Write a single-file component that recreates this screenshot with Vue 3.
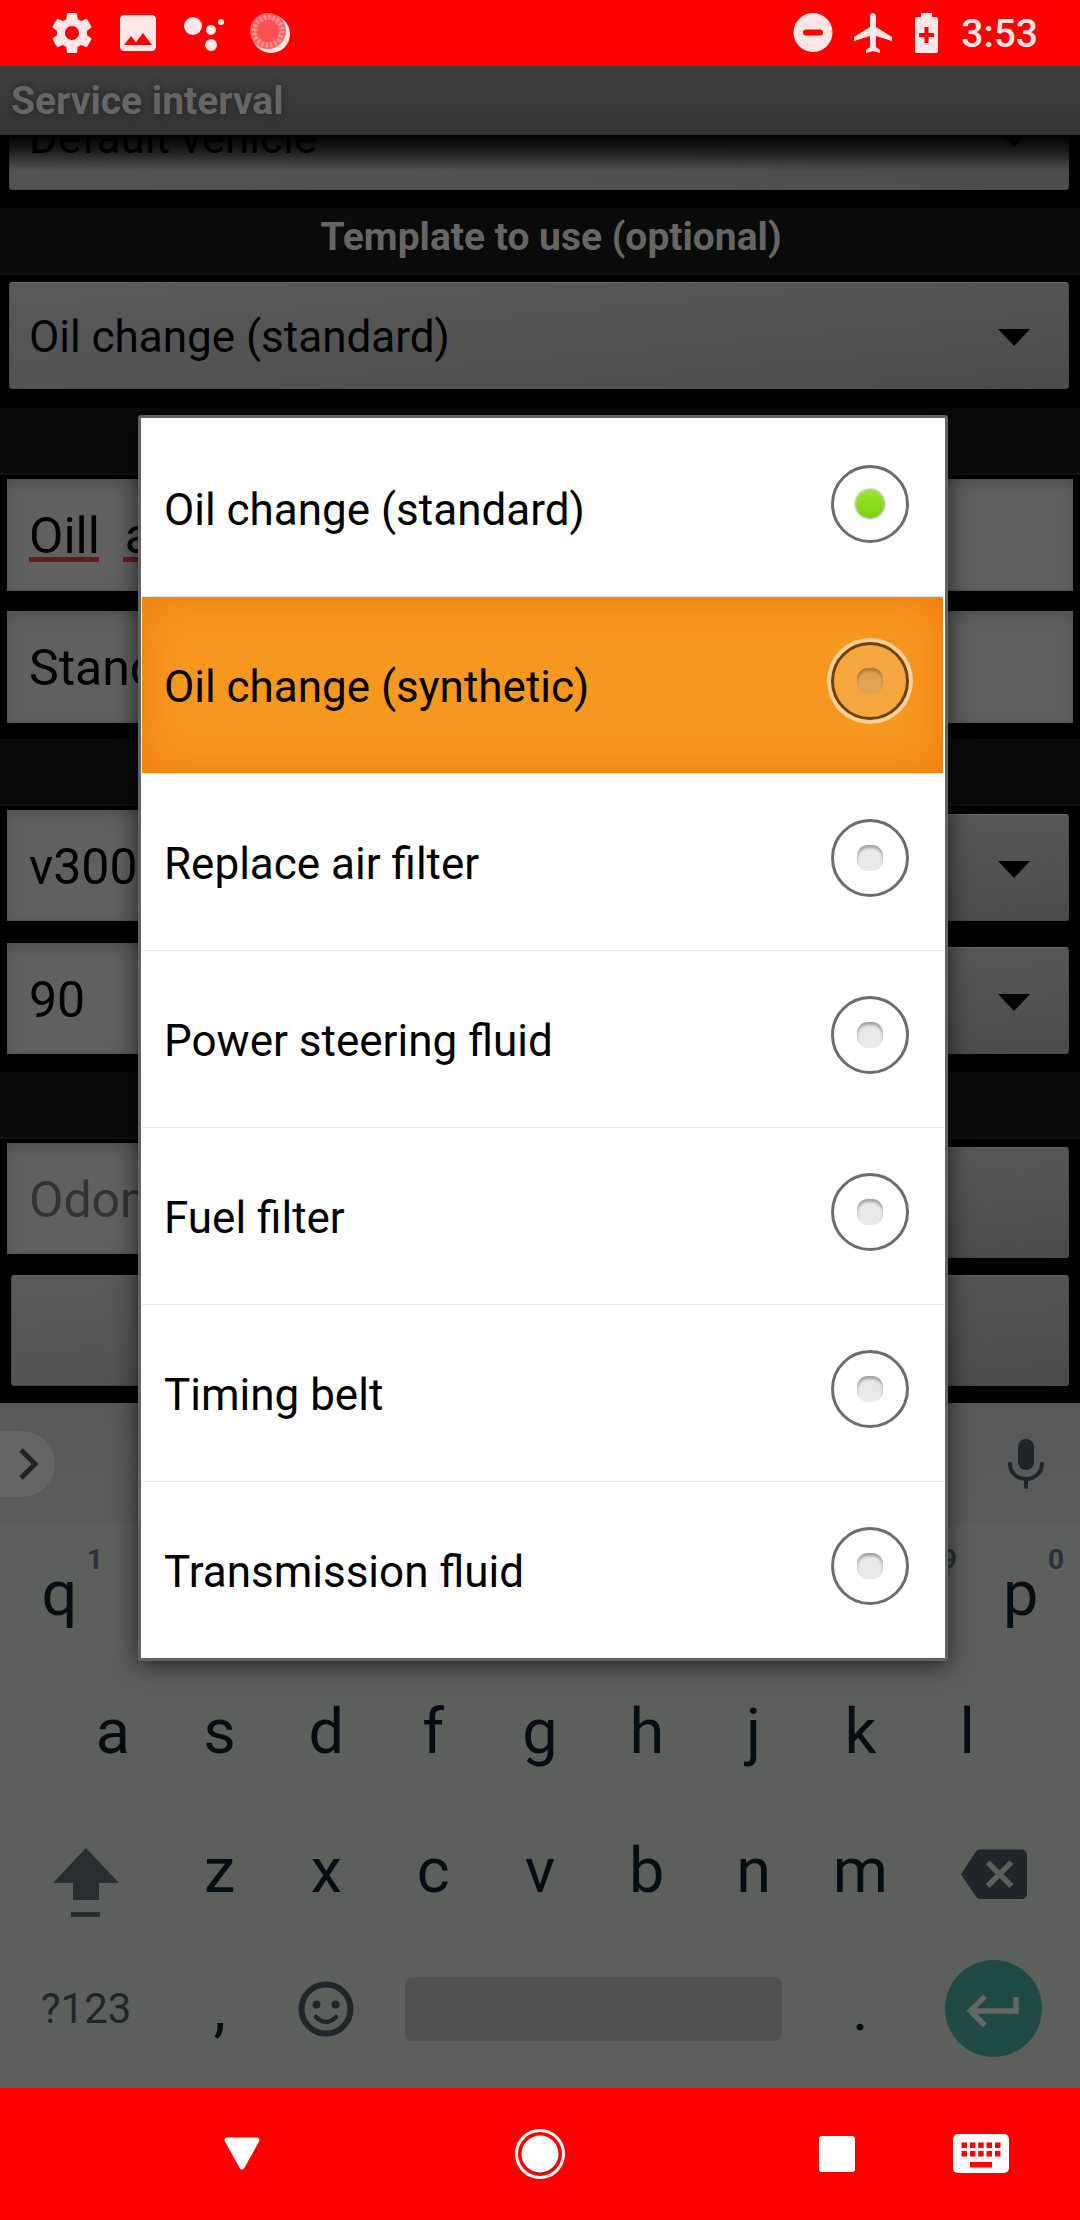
<script setup>
import { ref } from 'vue'

const templates = [
  'Oil change (standard)',
  'Oil change (synthetic)',
  'Replace air filter',
  'Power steering fluid',
  'Fuel filter',
  'Timing belt',
  'Transmission fluid',
]
const selected = ref(templates[0])
const pressed = templates[1]

const description = ref('Oill  a')
const kind = ref('Standard')
const distance = ref('v300')
const days = ref('90')
const odometer = ref('')

const topRow = [...'qwertyuiop'].map((key, i) => ({ key, hint: (i + 1) % 10 }))
const homeRow = [...'asdfghjkl']
const bottomRow = [...'zxcvbnm']
</script>

<template>
  <div class="screen">
    <header class="status">
      <svg class="icon48" viewBox="0 0 24 24"><path fill-rule="evenodd" d="M19.43 12.98c.04-.32.07-.64.07-.98s-.03-.66-.07-.98l2.11-1.65c.19-.15.24-.42.12-.64l-2-3.46c-.12-.22-.39-.3-.61-.22l-2.49 1c-.52-.4-1.08-.73-1.69-.98l-.38-2.65C14.46 2.18 14.25 2 14 2h-4c-.25 0-.46.18-.49.42l-.38 2.65c-.61.25-1.17.59-1.69.98l-2.49-1c-.23-.09-.49 0-.61.22l-2 3.46c-.13.22-.07.49.12.64l2.11 1.65c-.04.32-.07.65-.07.98s.03.66.07.98l-2.11 1.65c-.19.15-.24.42-.12.64l2 3.46c.12.22.39.3.61.22l2.49-1c.52.4 1.08.73 1.69.98l.38 2.65c.03.24.24.42.49.42h4c.25 0 .46-.18.49-.42l.38-2.65c.61-.25 1.17-.59 1.69-.98l2.49 1c.23.09.49 0 .61-.22l2-3.46c.12-.22.07-.49-.12-.64l-2.11-1.65zM12 15.5c-1.93 0-3.5-1.57-3.5-3.5s1.57-3.5 3.5-3.5 3.5 1.57 3.5 3.5-1.57 3.5-3.5 3.5z"/></svg>
      <svg class="icon48" viewBox="0 0 24 24"><path d="M21 19V5c0-1.1-.9-2-2-2H5c-1.1 0-2 .9-2 2v14c0 1.1.9 2 2 2h14c1.1 0 2-.9 2-2zM8.500 13.500l2.500 3.010L14.500 12l4.500 6H5l3.500-4.500z"/></svg>
      <svg class="icon48" viewBox="0 0 48 48"><circle cx="13" cy="17" r="9"/><circle cx="31" cy="21" r="5"/><circle cx="41" cy="13" r="3"/><circle cx="31" cy="36" r="6"/></svg>
      <svg class="icon48" viewBox="0 0 48 48">
        <circle cx="25" cy="25" r="19"/>
        <circle cx="22" cy="22" r="18" fill="#ff6464"/>
        <circle cx="22" cy="22" r="14" fill="none" stroke="#ff9c9c" stroke-width="5" stroke-dasharray="2 2.400"/>
        <circle cx="22" cy="22" r="11" fill="#ff5050"/>
      </svg>
      <span class="grow"></span>
      <svg class="icon48" viewBox="0 0 48 48"><path fill-rule="evenodd" d="M24 4a19.500 19.500 0 1 0 0 39 19.500 19.500 0 0 0 0-39zM17 20.500h14a3 3 0 0 1 0 6H17a3 3 0 0 1 0-6z"/></svg>
      <svg class="icon48" viewBox="-0.5 0 24 24"><path d="M21 16v-2l-8-5V3.500C13 2.670 12.330 2 11.500 2S10 2.670 10 3.500V9l-8 5v2l8-2.500V19l-2 1.500V22l3.500-1 3.500 1v-1.500L13 19v-5.500l8 2.500z"/></svg>
      <svg class="battery" viewBox="0 0 34 48"><path fill-rule="evenodd" d="M12 4h11v4h4a2 2 0 0 1 2 2v32a2 2 0 0 1-2 2H8a2 2 0 0 1-2-2V10a2 2 0 0 1 2-2h4zM15.500 18v6H10v4h5.500v6h4v-6H25v-4h-5.500v-6z"/></svg>
      <span class="clock">3:53</span>
    </header>

    <h1 class="title">Service interval</h1>

    <main class="form">
      <div class="spinner first">
        <select aria-label="Vehicle"><option>Default vehicle</option></select>
        <svg class="arrow" viewBox="0 0 32 17"><path d="M0 0h32L16 17z"/></svg>
      </div>

      <h2 class="section">Template to use (optional)</h2>
      <div class="fields template">
        <div class="spinner">
          <select v-model="selected" aria-label="Template to use (optional)">
            <option v-for="name in templates" :key="name">{{ name }}</option>
          </select>
          <svg class="arrow" viewBox="0 0 32 17"><path d="M0 0h32L16 17z"/></svg>
        </div>
      </div>

      <div class="section"></div>
      <div class="fields wide">
        <div class="spelled">
          <input v-model="description" class="text" type="text" aria-label="Description" spellcheck="false">
          <i class="misspelt word"></i><i class="misspelt next"></i>
        </div>
        <input v-model="kind" class="text" type="text" aria-label="Type">
      </div>

      <div class="section"></div>
      <div class="fields">
        <div class="pair">
          <input v-model="distance" class="text" type="text" aria-label="Distance interval">
          <div class="spinner">
            <select aria-label="Distance unit"><option></option></select>
            <svg class="arrow" viewBox="0 0 32 17"><path d="M0 0h32L16 17z"/></svg>
          </div>
        </div>
        <div class="pair">
          <input v-model="days" class="text" type="text" aria-label="Time interval">
          <div class="spinner">
            <select aria-label="Time unit"><option></option></select>
            <svg class="arrow" viewBox="0 0 32 17"><path d="M0 0h32L16 17z"/></svg>
          </div>
        </div>
      </div>

      <div class="section"></div>
      <div class="fields last">
        <div class="pair">
          <input v-model="odometer" class="text" type="text" placeholder="Odometer" aria-label="Odometer">
          <button class="action side" type="button" aria-label="Pick date"></button>
        </div>
        <button class="action" type="button" aria-label="Save"></button>
      </div>
    </main>

    <section class="keyboard">
      <div class="suggest">
        <button class="expand" type="button" aria-label="More">
          <svg viewBox="0 0 20 32"><path d="M2 2l14 14L2 30" fill="none" stroke="#1d2326" stroke-width="5"/></svg>
        </button>
        <button class="mic" type="button" aria-label="Voice input">
          <svg viewBox="0 0 36 50"><rect x="10" width="16" height="31" rx="8" fill="#1f2427"/><path d="M2 25a16 15 0 0 0 32 0M18 41v7" fill="none" stroke="#1f2427" stroke-width="4" stroke-linecap="round"/></svg>
        </button>
      </div>
      <div class="keys">
        <div class="keyrow">
          <button v-for="k in topRow" :key="k.key" class="key" type="button">{{ k.key }}<sup class="hint">{{ k.hint }}</sup></button>
        </div>
        <div class="keyrow home">
          <button v-for="k in homeRow" :key="k" class="key" type="button">{{ k }}</button>
        </div>
        <div class="keyrow">
          <button class="key mod" type="button" aria-label="Shift">
            <svg class="shift" viewBox="0 0 66 92"><path fill="#282e30" d="M33 24l33 35H46v17H20V59H0zM18 88h29v5H18z"/></svg>
          </button>
          <button v-for="k in bottomRow" :key="k" class="key" type="button">{{ k }}</button>
          <button class="key mod" type="button" aria-label="Backspace">
            <svg class="icon66" viewBox="0 -1.5 24 24"><path fill="#20262a" d="M22 3H7c-.69 0-1.23.35-1.590.880L0 12l5.410 8.110c.36.53.9.89 1.590.89h15c1.100 0 2-.9 2-2V5c0-1.100-.9-2-2-2zm-3 12.590L17.590 17 14 13.410 10.410 17 9 15.590 12.590 12 9 8.410 10.410 7 14 10.590 17.590 7 19 8.410 15.410 12 19 15.590z"/></svg>
          </button>
        </div>
        <div class="keyrow">
          <button class="key mod symbols" type="button">?123</button>
          <button class="key" type="button">,</button>
          <button class="key" type="button" aria-label="Emoji">
            <svg class="emoji" viewBox="0 0 56 56"><circle cx="28" cy="28" r="24.500" fill="none" stroke="#20262a" stroke-width="6"/><circle cx="18.500" cy="23.500" r="4" fill="#20262a"/><circle cx="37.500" cy="23.500" r="4" fill="#20262a"/><path d="M18 36q10 10 20 0" fill="none" stroke="#20262a" stroke-width="4.500" stroke-linecap="round"/></svg>
          </button>
          <button class="key space" type="button" aria-label="Space"><span class="bar"></span></button>
          <button class="key" type="button">.</button>
          <button class="key mod" type="button" aria-label="Enter">
            <span class="enter"><svg class="icon66" viewBox="0 -0.7 24 24"><path fill="#666" d="M19 7v4H5.830l3.580-3.590L8 6l-6 6 6 6 1.410-1.410L5.830 13H21V7z"/></svg></span>
          </button>
        </div>
      </div>
    </section>

    <nav class="nav">
      <button class="back" type="button" aria-label="Back"><svg width="38" height="34" viewBox="0 0 38 34"><path d="M4 3h30L19 30z" fill="#fff" stroke="#fff" stroke-width="5" stroke-linejoin="round"/></svg></button>
      <button class="homekey" type="button" aria-label="Home"><svg width="50" height="50" viewBox="0 0 50 50"><circle cx="25" cy="25" r="23.500" fill="none" stroke="#fff" stroke-width="3"/><circle cx="25.500" cy="26" r="18.500" fill="#8d2020"/><circle cx="25" cy="25" r="18.500" fill="#fff"/></svg></button>
      <button class="recents" type="button" aria-label="Recent apps"><svg width="36" height="36" viewBox="0 0 36 36"><rect width="36" height="36" rx="3" fill="#fff"/></svg></button>
      <button class="ime" type="button" aria-label="Switch keyboard"><svg width="56" height="40" viewBox="0 0 56 40"><path fill="#fff" fill-rule="evenodd" d="M5 0h46a5 5 0 0 1 5 5v29a5 5 0 0 1-5 5H5a5 5 0 0 1-5-5V5a5 5 0 0 1 5-5zM8.500 8.500v5.500H14V8.500zM17 8.500v5.500h5.500V8.500zM25.200 8.500v5.500h5.500V8.500zM33.500 8.500v5.500H39V8.500zM42 8.500v5.500h5.500V8.500zM8.500 17v5.500H14V17zM17 17v5.500h5.500V17zM25.200 17v5.500h5.500V17zM33.500 17v5.500H39V17zM42 17v5.500h5.500V17zM17 28v5.500h22V28z"/></svg></button>
    </nav>

    <div class="overlay">
      <div class="dialog" role="dialog" aria-label="Template to use">
        <label v-for="name in templates" :key="name" class="choice" :class="{ pressed: name === pressed }">
          <span>{{ name }}</span>
          <input v-model="selected" type="radio" name="template" :value="name">
        </label>
      </div>
    </div>
  </div>
</template>

<style>
body {
  margin: 0;
  background: #000;
}
</style>

<style scoped>
.screen {
  position: relative;
  display: flex;
  flex-direction: column;
  min-height: 100vh;
  background: #000;
  font-family: Roboto, "Liberation Sans", sans-serif;
}
.screen * {
  box-sizing: border-box;
}
button,
input,
select {
  appearance: none;
  margin: 0;
  padding: 0;
  border: 0;
  border-radius: 0;
  background: none;
  font: inherit;
  color: inherit;
}
svg {
  display: block;
  flex: none;
}

/* status bar */
.status {
  display: flex;
  align-items: center;
  gap: 18px;
  height: 66px;
  padding: 0 42px 0 48px;
  background: #f00;
  fill: #ffe6e6;
  color: #ffe6e6;
}
.icon48 {
  width: 48px;
  height: 48px;
}
.grow {
  flex: 1;
}
.grow ~ .icon48,
.battery {
  margin-left: -6px;
}
.battery {
  width: 34px;
  height: 48px;
}
.clock {
  padding-top: 2px;
  font-size: 39px;
  font-weight: 500;
  line-height: 48px;
}

.title {
  height: 69px;
  margin: 0;
  padding-left: 11px;
  background: linear-gradient(#3f3f3f, #333);
  color: #666;
  font-size: 39px;
  font-weight: 700;
  line-height: 70px;
  text-shadow: 0 0 6px #222;
}

/* form */
.form {
  position: relative;
  flex: 1;
  overflow: hidden;
}
.form::before {
  content: "";
  position: absolute;
  z-index: 1;
  inset: 0 0 auto;
  height: 36px;
  background: linear-gradient(#000, rgba(0, 0, 0, 0.7) 40%, transparent);
}
.spinner {
  display: grid;
  align-items: center;
  height: 107px;
  border: 1px solid #484848;
  border-top-color: #6a6a6a;
  border-radius: 3px;
  background: linear-gradient(175deg, #5a5a5a, #4c4c4c);
}
.spinner.first {
  margin: -52px 11px 18px 9px;
}
.spinner select {
  grid-area: 1 / 1;
  width: 100%;
  height: 100%;
  padding: 2px 0 0 19px;
  color: #000;
  font-size: 44px;
}
.arrow {
  grid-area: 1 / 1;
  justify-self: end;
  width: 32px;
  height: 17px;
  margin: 4px 38px 0 0;
  pointer-events: none;
}
.section {
  height: 67px;
  margin: 0;
  padding: 0 0 9px 22px;
  border-bottom: 2px solid #111;
  background: #0a0a0a;
  color: #666;
  font-size: 39px;
  font-weight: 700;
  line-height: 58px;
  text-align: center;
}
.fields {
  display: flex;
  flex-direction: column;
  gap: 22px;
  padding: 4px 11px 18px 7px;
}
.fields.template {
  padding: 7px 11px 19px 9px;
}
.fields.wide {
  gap: 20px;
  padding: 4px 7px 16px;
}
.fields.last {
  gap: 17px;
  padding: 4px 11px 17px;
}
.pair {
  display: grid;
  grid-template-columns: 1fr 1fr;
  gap: 8px;
  align-items: end;
}
.text {
  width: 100%;
  height: 111px;
  padding: 2px 21px 0;
  border: 1px solid #555;
  background: #606060;
  box-shadow: inset 0 4px 12px rgba(60, 60, 60, 0.4);
  color: #000;
  font-size: 50px;
}
.wide .text {
  height: 112px;
}
.text::placeholder {
  color: #333;
  opacity: 1;
}
.last .text {
  width: calc(100% + 4px);
  margin-left: -4px;
}
.last .pair {
  align-items: start;
}
.spelled {
  position: relative;
}
.spelled .text {
  display: block;
}
.misspelt {
  position: absolute;
  top: 78px;
  height: 5px;
  background: #651b1b;
}
.word {
  left: 22px;
  width: 70px;
}
.next {
  left: 116px;
  width: 26px;
}
.action {
  height: 111px;
  border: 1px solid #484848;
  border-top-color: #5e5e5e;
  border-radius: 3px;
  background: linear-gradient(175deg, #5a5a5a, #4c4c4c);
}
.side {
  margin-top: 4px;
}

/* keyboard */
.keyboard {
  background: #5d5f5d;
}
.suggest {
  display: flex;
  align-items: center;
  justify-content: space-between;
  height: 121px;
  padding-right: 36px;
  background: linear-gradient(#58595b, #5b5b5d);
}
.expand {
  display: flex;
  align-items: center;
  width: 55px;
  height: 66px;
  padding-left: 19px;
  border-radius: 0 33px 33px 0;
  background: #656565;
}
.expand svg {
  width: 20px;
  height: 32px;
}
.mic svg {
  width: 36px;
  height: 50px;
}
.keys {
  display: grid;
  grid-auto-rows: 1fr;
  height: 564px;
  padding: 0 6px 10px;
}
.keyrow {
  display: flex;
}
.keyrow.home {
  padding: 0 5%;
}
.key {
  position: relative;
  display: flex;
  flex: 2 1 0;
  align-items: center;
  justify-content: center;
  min-width: 0;
  color: #050f13;
  font-size: 63px;
}
.mod {
  flex-grow: 3;
}
.space {
  flex-grow: 8;
}
.symbols {
  color: #20262a;
  font-size: 42px;
}
.hint {
  position: absolute;
  top: 22px;
  right: 10px;
  color: #2b3134;
  font-size: 28px;
  font-weight: 700;
  line-height: 28px;
}
.shift {
  width: 66px;
  height: 92px;
  overflow: visible;
}
.icon66 {
  width: 66px;
  height: 66px;
}
.emoji {
  width: 56px;
  height: 56px;
}
.bar {
  flex: 1;
  height: 64px;
  margin: 0 25px;
  border-radius: 8px;
  background: #505153;
}
.enter {
  display: grid;
  place-items: center;
  width: 97px;
  height: 97px;
  border-radius: 50%;
  background: #1f4a45;
}

/* navigation bar */
.nav {
  display: grid;
  grid-template-columns: 484fr 112fr 182fr 118fr 170fr 14fr;
  height: 132px;
  background: #f00;
}
.nav button {
  display: grid;
  place-items: center;
}
.recents {
  grid-column: 4;
}

/* template chooser */
.overlay {
  position: absolute;
  inset: 0;
  padding: 415px 132px 0 138px;
}
.dialog {
  padding: 2px 2px 0 1px;
  border: 3px solid #636363;
  border-radius: 3px;
  background: #fff;
  box-shadow: 0 4px 24px rgba(0, 0, 0, 0.65);
}
.choice {
  display: flex;
  align-items: center;
  justify-content: space-between;
  height: 176px;
  padding: 4px 34px 0 22px;
  color: #000;
  font-size: 44px;
}
.choice + .choice {
  height: 177px;
  border-top: 1px solid #e6e6e6;
}
.choice.pressed {
  background: #f6981f;
  box-shadow: inset 0 0 44px #f07a0c;
}
.choice input {
  display: grid;
  place-items: center;
  width: 78px;
  height: 78px;
  margin-bottom: 12px;
  border: 3px solid #6c6c6c;
  border-radius: 50%;
}
.choice input::before {
  content: "";
  width: 26px;
  height: 26px;
  border-radius: 11px;
  background: #e9e9e9;
  box-shadow: inset 0 3px 3px #a0a0a0;
}
.choice input:checked::before {
  width: 28px;
  height: 28px;
  border-radius: 50%;
  background: linear-gradient(#97e827, #7fd012);
  box-shadow: 0 0 2px 1px #999;
}
.choice.pressed input {
  border-color: #6b430e;
  background: #f6a640;
  box-shadow: 0 0 0 4px #fbcf97;
}
.choice.pressed input::before {
  background: #dfa356;
  box-shadow: inset 0 3px 3px #a87836;
}
</style>
